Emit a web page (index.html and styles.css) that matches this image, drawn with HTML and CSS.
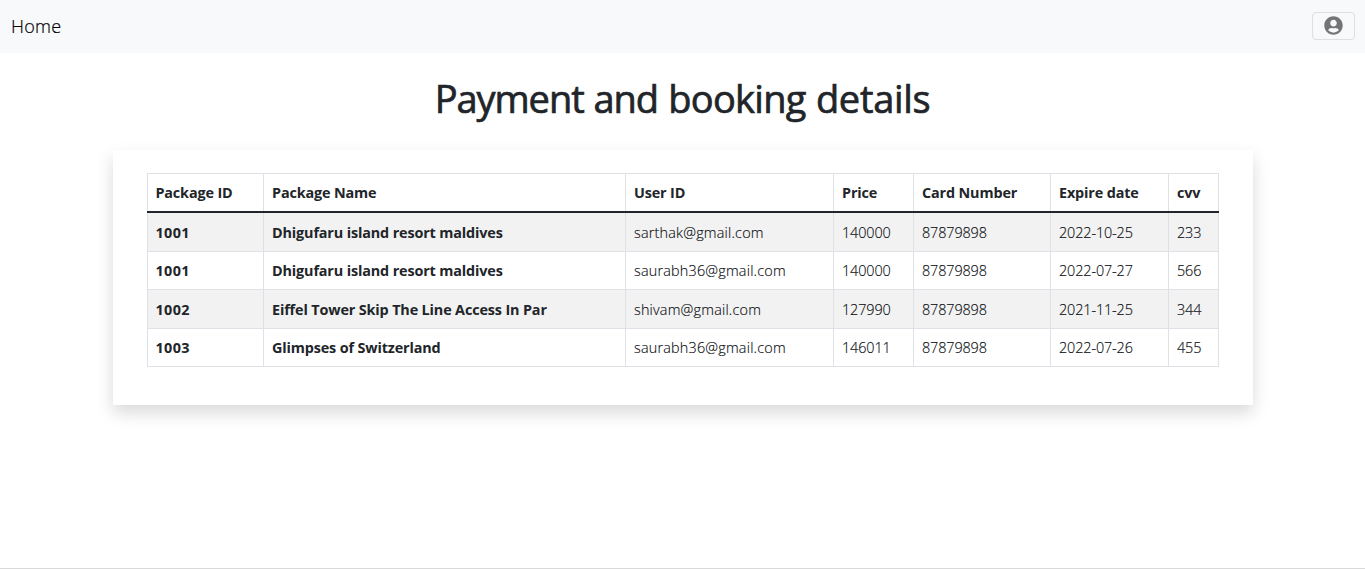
FILE: index.html
```html
<!DOCTYPE html>
<html lang="en">
<head>
<meta charset="utf-8">
<title>Payment and booking details</title>
<link rel="stylesheet" href="styles.css">
</head>
<body>
<nav class="navbar">
  <a class="home">Home</a>
  <button class="account" aria-label="Account">
    <svg class="account-icon" viewBox="0 0 496 512"><path fill="#747474" d="M248 8C111 8 0 119 0 256s111 248 248 248 248-111 248-248S385 8 248 8zm0 96c48.600 0 88 39.400 88 88s-39.400 88-88 88-88-39.400-88-88 39.400-88 88-88zm0 344c-58.700 0-111.300-26.600-146.500-68.200 18.800-35.400 55.600-59.800 98.500-59.800 2.400 0 4.800.4 7.100 1.100 13 4.200 26.600 6.900 40.900 6.900s28-2.700 40.900-6.900c2.300-.7 4.700-1.100 7.100-1.100 42.900 0 79.700 24.400 98.500 59.800C359.300 421.400 306.700 448 248 448z"/></svg>
  </button>
</nav>
<main class="content">
  <h1 class="title"><span class="lead">Payment and</span> booking <span class="tail">details</span></h1>
  <section class="card">
    <table class="bookings">
      <colgroup><col class="c-id"><col class="c-name"><col class="c-user"><col class="c-price"><col class="c-card"><col class="c-date"><col class="c-cvv"></colgroup>
      <thead>
        <tr><th>Package ID</th><th>Package Name</th><th>User ID</th><th>Price</th><th>Card Number</th><th>Expire date</th><th>cvv</th></tr>
      </thead>
      <tbody>
        <tr><th>1001</th><th>Dhigufaru island resort maldives</th><td class="email">sarthak@gmail.com</td><td>140000</td><td>87879898</td><td>2022-10-25</td><td>233</td></tr>
        <tr><th>1001</th><th>Dhigufaru island resort maldives</th><td class="email">saurabh36@gmail.com</td><td>140000</td><td>87879898</td><td>2022-07-27</td><td>566</td></tr>
        <tr><th>1002</th><th>Eiffel Tower Skip The Line Access In Par</th><td class="email">shivam@gmail.com</td><td>127990</td><td>87879898</td><td>2021-11-25</td><td>344</td></tr>
        <tr><th>1003</th><th>Glimpses of Switzerland</th><td class="email">saurabh36@gmail.com</td><td>146011</td><td>87879898</td><td>2022-07-26</td><td>455</td></tr>
      </tbody>
    </table>
  </section>
</main>
<footer class="footer"></footer>
</body>
</html>
```
FILE: styles.css
```css
* { box-sizing: border-box; }
body {
  margin: 0;
  height: 571px;
  display: flex;
  flex-direction: column;
  overflow: hidden;
  background: #fff;
  color: #212529;
  font-family: "Open Sans", "Noto Sans", sans-serif;
  font-size: 14.4px;
}
.navbar {
  height: 53px;
  flex: none;
  display: flex;
  align-items: center;
  justify-content: space-between;
  padding: 0 10px 2px 11px;
  background: #f8f9fb;
}
.home { font-size: 18px; font-weight: 300; letter-spacing: .3px; color: #000; -webkit-text-stroke: .2px #000; }
.account {
  width: 43px;
  height: 28px;
  display: flex;
  align-items: center;
  justify-content: center;
  padding: 0;
  background: transparent;
  border: 1px solid #dddfe1;
  border-radius: 4px;
}
.account-icon { width: 19px; height: 19px; }
.content { flex: 1; }
.title {
  margin: 21px 0 28px;
  height: 48px;
  line-height: 48px;
  text-align: center;
  font-size: 38px;
  font-weight: 400;
  letter-spacing: -.7px;
  word-spacing: 1px;
  -webkit-text-stroke: .7px #212529;
}
.title .lead { letter-spacing: -1.050px; }
.title .tail { letter-spacing: -.3px; }
.card {
  width: 1140px;
  height: 255px;
  margin: 0 0 0 113px;
  padding: 23px 34px;
  background: #fff;
  box-shadow: 0 8px 16px rgba(0, 0, 0, .15);
}
.bookings {
  width: 1072px;
  table-layout: fixed;
  border-collapse: collapse;
  line-height: 21px;
}
.bookings th, .bookings td {
  height: 38px;
  padding: 7px 8px 8px;
  border: 1px solid #dee2e6;
  text-align: left;
  white-space: nowrap;
}
.bookings th { font-weight: 700; letter-spacing: -.14px; }
.bookings td { font-weight: 300; letter-spacing: -.12px; color: #0c0f12; -webkit-text-stroke: .15px #0c0f12; }
.bookings .email { letter-spacing: .2px; }
.bookings thead th { height: 38.5px; border-bottom: 2px solid #212529; }
.bookings tbody tr:nth-child(odd) { background: #f2f2f2; }
.bookings tbody tr:nth-child(odd) > * { padding: 8px 8px 7px; }
.bookings tbody tr:first-child > * { height: 39.5px; }
.bookings tbody tr:nth-child(3) > * { height: 39px; }
.bookings tr > th:first-child { padding-left: 7.400px; }
.bookings tbody tr > th:first-child { padding-left: 7.400px; letter-spacing: .4px; }
.c-id { width: 116px; }
.c-name { width: 362px; }
.c-user { width: 208px; }
.c-price { width: 80px; }
.c-card { width: 137px; }
.c-date { width: 118px; }
.c-cvv { width: 50px; }
.footer { height: 3px; border-top: 1px solid #d9d9d9; }
```
